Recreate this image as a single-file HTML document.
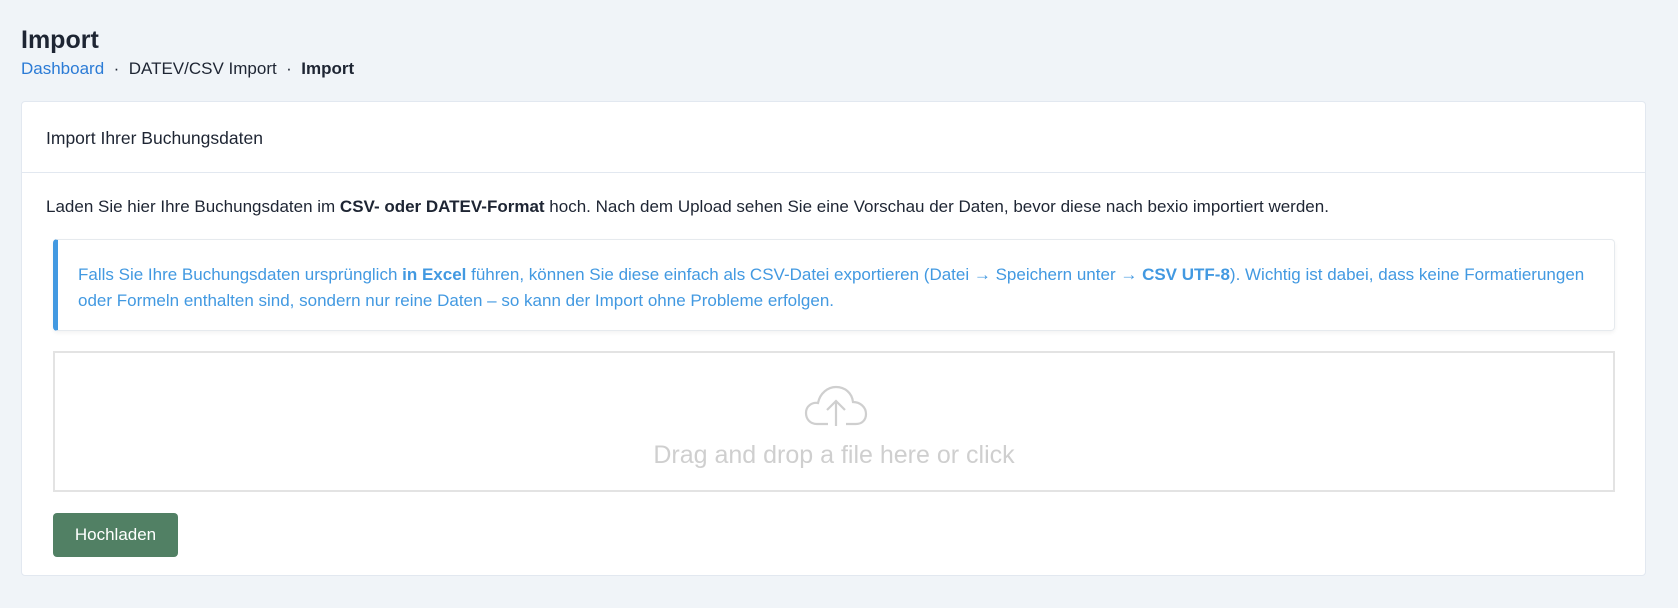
<!DOCTYPE html>
<html><head><meta charset="utf-8"><style>
*{box-sizing:border-box;margin:0;padding:0}
body{width:1678px;height:608px;background:#f0f4f8;font-family:"Liberation Sans",sans-serif;color:#1a202c;position:relative;overflow:hidden}
.abs{position:absolute}
h1{position:absolute;left:21px;top:26px;font-size:25px;font-weight:bold;color:#1e2533}
.bc{left:21px;top:59px;font-size:17px;color:#1e2533;white-space:nowrap}
.bc a{color:#2b7bd6;text-decoration:none}
.card{left:21px;top:101px;width:1625px;height:475px;background:#fff;border:1px solid #e2e8f0;border-radius:4px}
.hd{left:0;top:0;width:100%;height:71px;border-bottom:1px solid #e2e8f0;padding:26px 0 0 24px;font-size:17.5px;color:#1e2533}
.p{left:24px;top:95px;font-size:17px;white-space:nowrap;color:#1e2533}
.al{left:31px;top:137px;width:1562px;height:92px;border:1px solid #e6eaee;border-left:5px solid #4299e1;border-radius:4px;box-shadow:0 2px 4px rgba(0,0,0,.05);padding:22px 0 0 20px;color:#4299e1;font-size:17px;line-height:26px;white-space:nowrap}
.dz{left:31px;top:249px;width:1562px;height:141px;border:2px solid #e3e3e3}
.dt{left:0;width:100%;top:88px;text-align:center;font-size:25px;color:#cfcfcf}
.btn{left:31px;top:411px;width:125px;height:44px;background:#518064;border-radius:4px;color:#fff;font-size:17px;text-align:center;line-height:44px}
</style></head><body>
<h1>Import</h1>
<div class="abs bc"><a>Dashboard</a> &nbsp;·&nbsp; DATEV/CSV Import &nbsp;·&nbsp; <b>Import</b></div>
<div class="abs card">
<div class="abs hd">Import Ihrer Buchungsdaten</div>
<div class="abs p">Laden Sie hier Ihre Buchungsdaten im <b>CSV- oder DATEV-Format</b> hoch. Nach dem Upload sehen Sie eine Vorschau der Daten, bevor diese nach bexio importiert werden.</div>
<div class="abs al">Falls Sie Ihre Buchungsdaten ursprünglich <b>in Excel</b> führen, können Sie diese einfach als CSV-Datei exportieren (Datei → Speichern unter → <b>CSV UTF-8</b>). Wichtig ist dabei, dass keine Formatierungen<br>oder Formeln enthalten sind, sondern nur reine Daten – so kann der Import ohne Probleme erfolgen.</div>
<div class="abs dz">
<svg class="abs" style="left:749px;top:30px" width="64" height="44" viewBox="0 0 64 44" fill="none" stroke="#cfcfcf" stroke-width="2.2"><path d="M24 41H13C6 41 2 36 2 30C2 23 8 19 14 20C16 10 24 4 32 4C41 4 48 10 49 19C56 19 62 24 62 31C62 37 58 41 52 41H42"/><path d="M32 43V18M23 27L32 18L41 27"/></svg>
<div class="abs dt">Drag and drop a file here or click</div>
</div>
<div class="abs btn">Hochladen</div>
</div>
</body></html>
